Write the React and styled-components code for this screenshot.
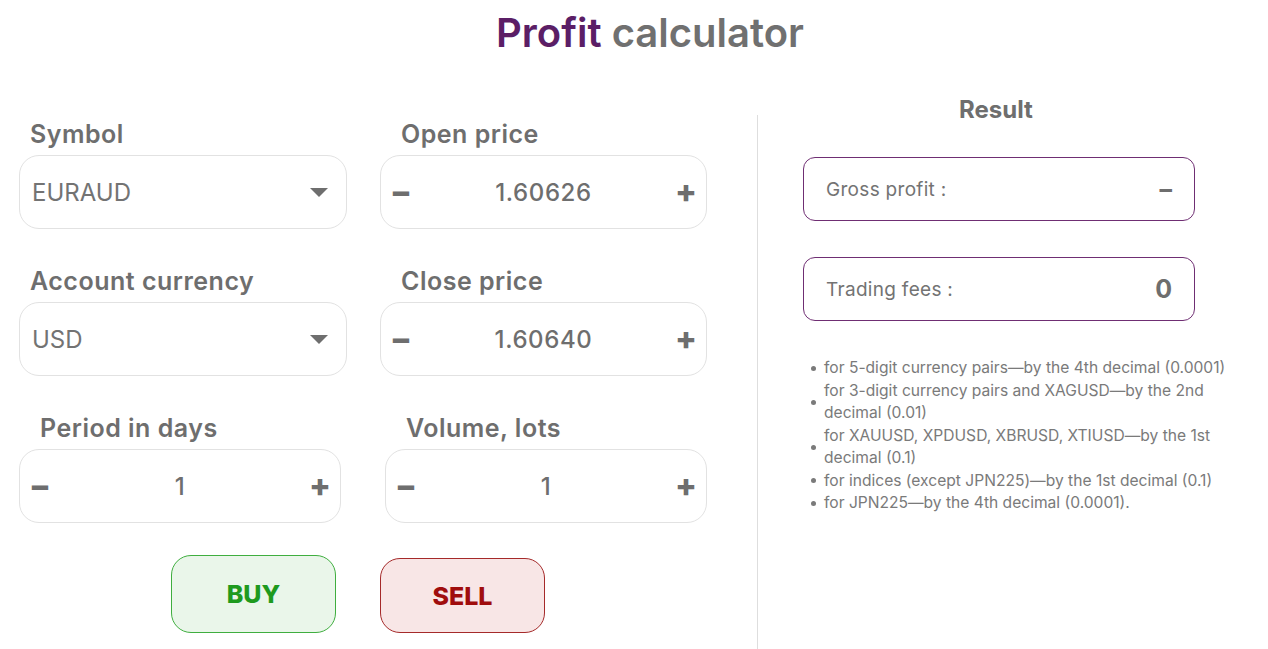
import React from 'react'
import styled, { createGlobalStyle } from 'styled-components'

const GlobalStyle = createGlobalStyle`
  html, body {
    margin: 0;
    padding: 0;
    background: #ffffff;
    font-family: Inter, "Open Sans", sans-serif;
    color: #707070;
  }
`

const Page = styled.div`
  width: 1268px;
  height: 649px;
  overflow: hidden;
  display: flex;
  flex-direction: column;
`

const Title = styled.h1`
  margin: 0;
  height: 66px;
  line-height: 66px;
  text-align: center;
  font-size: 40px;
  font-weight: 600;
  color: #707070;
  padding-left: 32px;
  span {
    color: #5b1e66;
  }
`

const Main = styled.div`
  flex: 1;
  display: flex;
  margin-top: 24px;
`

const Left = styled.div`
  width: 688px;
  padding: 26px 0 0 19px;
  display: flex;
  flex-direction: column;
  gap: 34px;
`

const Row = styled.div`
  display: flex;
  justify-content: space-between;
`

const Field = styled.div`
  width: ${p => p.$w}px;
  display: flex;
  flex-direction: column;
  gap: 3px;
`

const Label = styled.div`
  font-size: 25px;
  font-weight: 600;
  letter-spacing: 0.5px;
  line-height: 36px;
  padding-left: ${p => p.$pad}px;
  color: #6e6e6e;
`

const Box = styled.div`
  height: 74px;
  border: 1px solid #e2e2e2;
  border-radius: 20px;
  display: flex;
  align-items: center;
  box-sizing: border-box;
`

const SelectBox = styled(Box)`
  padding: 0 18px 0 12px;
  justify-content: space-between;
  font-size: 24px;
  color: #737373;
`

const Caret = styled.span`
  width: 0;
  height: 0;
  border-left: 9px solid transparent;
  border-right: 9px solid transparent;
  border-top: 9px solid #6e6e6e;
`

const StepBox = styled(Box)`
  padding: 0 12px;
  justify-content: space-between;
`

const StepBtn = styled.span`
  width: 16px;
  display: flex;
  justify-content: center;
  font-size: 32px;
  font-weight: 800;
  color: #6e6e6e;
  line-height: 1;
`

const Value = styled.span`
  font-size: 24px;
  font-weight: 500;
  letter-spacing: 0.6px;
  color: #6e6e6e;
`

const Buttons = styled.div`
  display: flex;
  justify-content: center;
  align-items: center;
  gap: 44px;
  margin-top: -2px;
  padding-right: 10px;
`

const TradeButton = styled.button`
  width: 165px;
  height: ${p => (p.$buy ? 78 : 75)}px;
  margin-top: ${p => (p.$buy ? 0 : 3)}px;
  border-radius: 20px;
  border: 1px solid ${p => (p.$buy ? '#3fae3f' : '#a52a2a')};
  background: ${p => (p.$buy ? '#eaf6ea' : '#f8e6e6')};
  color: ${p => (p.$buy ? '#1e9a1e' : '#a00d0d')};
  font-family: Inter, sans-serif;
  font-size: 25px;
  font-weight: 800;
  cursor: pointer;
`

const Divider = styled.div`
  width: 1px;
  background: #dedede;
  margin: 25px 0 0 50px;
`

const Right = styled.div`
  flex: 1;
  display: flex;
  flex-direction: column;
  padding-left: 45px;
  padding-top: 2px;
`

const ResultTitle = styled.div`
  width: 386px;
  text-align: center;
  font-size: 24px;
  font-weight: 700;
  line-height: 36px;
  color: #6e6e6e;
  margin-bottom: 29px;
`

const ResultBox = styled.div`
  width: 392px;
  height: 64px;
  box-sizing: border-box;
  border: 1.5px solid #6f2e73;
  border-radius: 12px;
  display: flex;
  align-items: center;
  justify-content: space-between;
  padding: 0 22px;
  margin-bottom: 36px;
`

const ResultLabel = styled.span`
  font-size: 19px;
  letter-spacing: 0.3px;
  color: #737373;
`

const ResultValue = styled.span`
  font-size: 25px;
  font-weight: 700;
  color: #6e6e6e;
`

const Notes = styled.ul`
  list-style: none;
  margin: 0;
  padding: 0 0 0 8px;
  width: 430px;
`

const Note = styled.li`
  display: flex;
  align-items: center;
  font-size: 15.6px;
  line-height: 22.5px;
  color: #7a7a7a;
  &::before {
    content: '';
    flex: 0 0 5px;
    height: 5px;
    border-radius: 50%;
    background: #7a7a7a;
    margin-right: 8px;
  }
`

const Select = ({ label, value }) => (
  <Field $w={328}>
    <Label $pad={11}>{label}</Label>
    <SelectBox>
      {value}
      <Caret />
    </SelectBox>
  </Field>
)

const Stepper = ({ label, value, w }) => (
  <Field $w={w}>
    <Label $pad={21}>{label}</Label>
    <StepBox>
      <StepBtn>−</StepBtn>
      <Value>{value}</Value>
      <StepBtn>+</StepBtn>
    </StepBox>
  </Field>
)

const notes = [
  'for 5-digit currency pairs—by the 4th decimal (0.0001)',
  'for 3-digit currency pairs and XAGUSD—by the 2nd decimal (0.01)',
  'for XAUUSD, XPDUSD, XBRUSD, XTIUSD—by the 1st decimal (0.1)',
  'for indices (except JPN225)—by the 1st decimal (0.1)',
  'for JPN225—by the 4th decimal (0.0001).',
]

export default function App() {
  return (
    <Page>
      <GlobalStyle />
      <Title>
        <span>Profit</span> calculator
      </Title>
      <Main>
        <Left>
          <Row>
            <Select label="Symbol" value="EURAUD" />
            <Stepper label="Open price" value="1.60626" w={327} />
          </Row>
          <Row>
            <Select label="Account currency" value="USD" />
            <Stepper label="Close price" value="1.60640" w={327} />
          </Row>
          <Row>
            <Stepper label="Period in days" value="1" w={322} />
            <Stepper label="Volume, lots" value="1" w={322} />
          </Row>
          <Buttons>
            <TradeButton $buy>BUY</TradeButton>
            <TradeButton>SELL</TradeButton>
          </Buttons>
        </Left>
        <Divider />
        <Right>
          <ResultTitle>Result</ResultTitle>
          <ResultBox>
            <ResultLabel>Gross profit :</ResultLabel>
            <ResultValue>–</ResultValue>
          </ResultBox>
          <ResultBox>
            <ResultLabel>Trading fees :</ResultLabel>
            <ResultValue>0</ResultValue>
          </ResultBox>
          <Notes>
            {notes.map(n => (
              <Note key={n}>{n}</Note>
            ))}
          </Notes>
        </Right>
      </Main>
    </Page>
  )
}
